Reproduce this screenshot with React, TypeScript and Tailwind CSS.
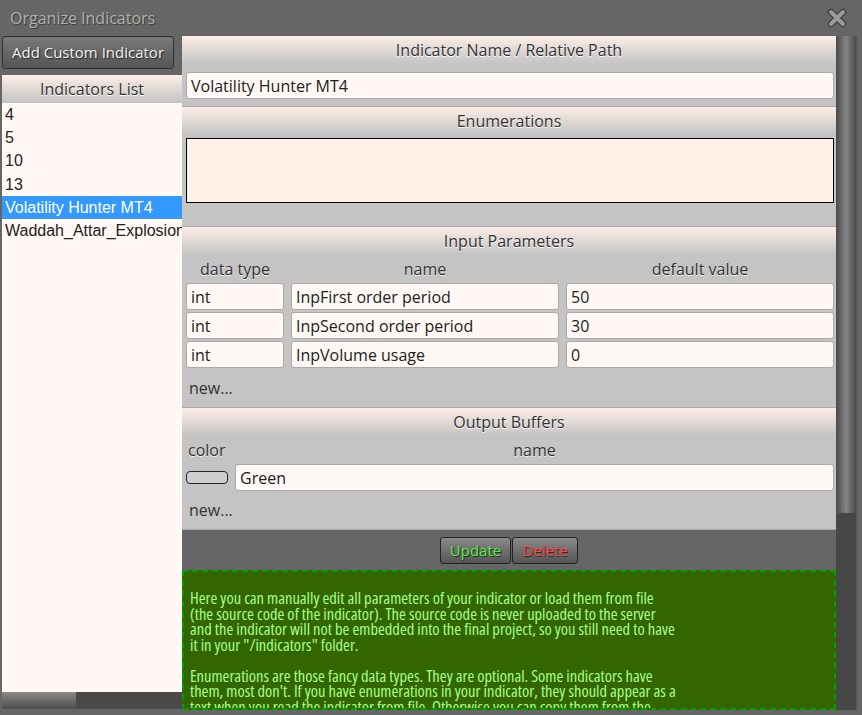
import React from "react";

const ui = { fontFamily: '"Open Sans", "Noto Sans", sans-serif' };
const arial = { fontFamily: '"Liberation Sans", Arial, sans-serif' };

const SectionHeader = ({ title }: { title: string }) => (
  <div className="h-[28px] flex items-center justify-center bg-gradient-to-b from-[#fdeee6] to-[#c4c4c4] text-[16px] text-[#333] [text-shadow:0_1px_0_#fff]">
    {title}
  </div>
);

const Field = ({ value, className = "" }: { value: string; className?: string }) => (
  <div
    className={
      "h-[27px] flex items-center px-[4px] bg-[#fff8f4] border border-[#aaa] rounded-[3px] text-[16px] text-[#222] " +
      className
    }
  >
    {value}
  </div>
);

const params = [
  { type: "int", name: "InpFirst order period", value: "50" },
  { type: "int", name: "InpSecond order period", value: "30" },
  { type: "int", name: "InpVolume usage", value: "0" },
];

const indicators = ["4", "5", "10", "13", "Volatility Hunter MT4", "Waddah_Attar_Explosion"];

export default function App() {
  return (
    <div className="w-[862px] h-[715px] bg-[#666] flex flex-col overflow-hidden" style={ui}>
      {/* title bar */}
      <div className="h-[36px] shrink-0 flex items-center justify-between pl-[10px] pr-[15px]">
        <span className="text-[16px] text-[#b0b0b0] [text-shadow:1px_1px_1px_#3a3a3a]">Organize Indicators</span>
        <svg width="20" height="20" viewBox="0 0 20 20">
          <path d="M4 4 L16 16 M16 4 L4 16" stroke="#3e3e3e" strokeWidth="6.5" strokeLinecap="round" />
          <path d="M4 4 L16 16 M16 4 L4 16" stroke="#9a9a9a" strokeWidth="4" strokeLinecap="round" />
        </svg>
      </div>

      <div className="flex-1 min-h-0 flex pb-[5px]">
        {/* left column */}
        <div className="w-[182px] shrink-0 pl-[2px] flex flex-col">
          <button className="w-[172px] h-[33px] shrink-0 rounded-[3px] border border-[#2e2e2e] bg-gradient-to-b from-[#7a7a7a] to-[#555] text-[15px] text-[#f2f2f2] [text-shadow:1px_1px_1px_#222]">
            Add Custom Indicator
          </button>
          <div className="mt-[6px] flex-1 min-h-0 flex flex-col">
            <div className="h-[28px] shrink-0 flex items-center justify-center bg-gradient-to-b from-[#fdeee6] to-[#c4c4c4] text-[16px] text-[#333] [text-shadow:0_1px_0_#fff]">
              Indicators List
            </div>
            <div className="flex-1 min-h-0 bg-[#fff8f4] overflow-hidden" style={arial}>
              {indicators.map((it) => (
                <div
                  key={it}
                  className={
                    "h-[23.3px] flex items-center pl-[3px] text-[16px] whitespace-nowrap " +
                    (it === "Volatility Hunter MT4" ? "bg-[#3399ff] text-white" : "text-[#222]")
                  }
                >
                  {it}
                </div>
              ))}
            </div>
            <div className="h-[17px] shrink-0 bg-[#4a4a4a] flex">
              <div className="w-[74px] h-full bg-gradient-to-b from-[#8a8a8a] via-[#6a6a6a] to-[#4e4e4e]" />
            </div>
            <div className="h-[1px] shrink-0" />
          </div>
        </div>

        {/* right column */}
        <div className="w-[654px] shrink-0 flex flex-col min-h-0">
          <div className="bg-[#c4c4c4] border-b border-[#aaa]">
            <SectionHeader title="Indicator Name / Relative Path" />
            <div className="pt-[8px] pb-[7px] pl-[4px] pr-[2px]">
              <Field value="Volatility Hunter MT4" />
            </div>
          </div>

          <div className="bg-[#c4c4c4] border-b border-[#aaa]">
            <SectionHeader title="Enumerations" />
            <div className="pt-[3px] pb-[23px] pl-[4px] pr-[2px]">
              <div className="h-[65px] bg-[#fff0e8] border border-black" />
            </div>
          </div>

          <div className="bg-[#c4c4c4] border-b border-[#aaa]">
            <SectionHeader title="Input Parameters" />
            <div className="pl-[4px] pr-[2px]">
              <div className="grid grid-cols-[98px_1fr_1fr] gap-x-[7px] h-[28px] items-center text-[16px] text-[#333] text-center [text-shadow:0_1px_0_#eee]">
                <span>data type</span>
                <span>name</span>
                <span>default value</span>
              </div>
              <div className="flex flex-col gap-[2px]">
                {params.map((p) => (
                  <div key={p.name} className="grid grid-cols-[98px_1fr_1fr] gap-x-[7px]">
                    <Field value={p.type} />
                    <Field value={p.name} />
                    <Field value={p.value} />
                  </div>
                ))}
              </div>
              <div className="h-[39px] flex items-center pl-[3px] text-[16px] text-[#333]">new...</div>
            </div>
          </div>

          <div className="bg-[#c4c4c4]">
            <SectionHeader title="Output Buffers" />
            <div className="pl-[4px] pr-[2px]">
              <div className="flex h-[28px] items-center text-[16px] text-[#333] [text-shadow:0_1px_0_#eee]">
                <span className="w-[49px] pl-[2px]">color</span>
                <span className="flex-1 text-center">name</span>
              </div>
              <div className="flex items-center gap-[7px]">
                <div className="w-[42px] h-[13px] rounded-[4px] border border-[#222] bg-[#cfcfcf]" />
                <Field value="Green" className="flex-1" />
              </div>
              <div className="h-[38px] flex items-center pl-[3px] text-[16px] text-[#333]">new...</div>
            </div>
          </div>

          <div className="h-[41px] shrink-0 border-t border-[#aaa] flex items-center justify-center">
            <button className="w-[71px] h-[27px] rounded-[3px] border border-[#222] bg-gradient-to-b from-[#8a8a8a] to-[#555] text-[15px] text-[#55ee44] [text-shadow:1px_1px_1px_#222]">
              Update
            </button>
            <button className="w-[66px] h-[27px] ml-[1px] rounded-[3px] border border-[#222] bg-gradient-to-b from-[#8a8a8a] to-[#555] text-[15px] text-[#ff4a4a] [text-shadow:1px_1px_1px_#222]">
              Delete
            </button>
          </div>

          <div className="flex-1 min-h-0 overflow-hidden bg-[#336600] border-2 border-dashed border-[#00a000] pt-[18px] pl-[6px] pr-[4px] text-[16.5px] leading-[15.5px] text-[#a6ff8a] whitespace-nowrap font-stretch-condensed">
            <p>
              Here you can manually edit all parameters of your indicator or load them from file
              <br />
              (the source code of the indicator). The source code is never uploaded to the server
              <br />
              and the indicator will not be embedded into the final project, so you still need to have
              <br />
              it in your "/indicators" folder.
            </p>
            <p className="mt-[15.5px]">
              Enumerations are those fancy data types. They are optional. Some indicators have
              <br />
              them, most don't. If you have enumerations in your indicator, they should appear as a
              <br />
              text when you read the indicator from file. Otherwise you can copy them from the
            </p>
          </div>
        </div>

        {/* vertical scrollbar */}
        <div className="w-[20px] shrink-0 flex flex-col bg-[#474747]">
          <div className="h-[477px] bg-gradient-to-r from-[#4a4a4a] via-[#858585] to-[#4a4a4a]" />
        </div>
        <div className="w-[1px] shrink-0 bg-[#555]" />
      </div>
    </div>
  );
}
